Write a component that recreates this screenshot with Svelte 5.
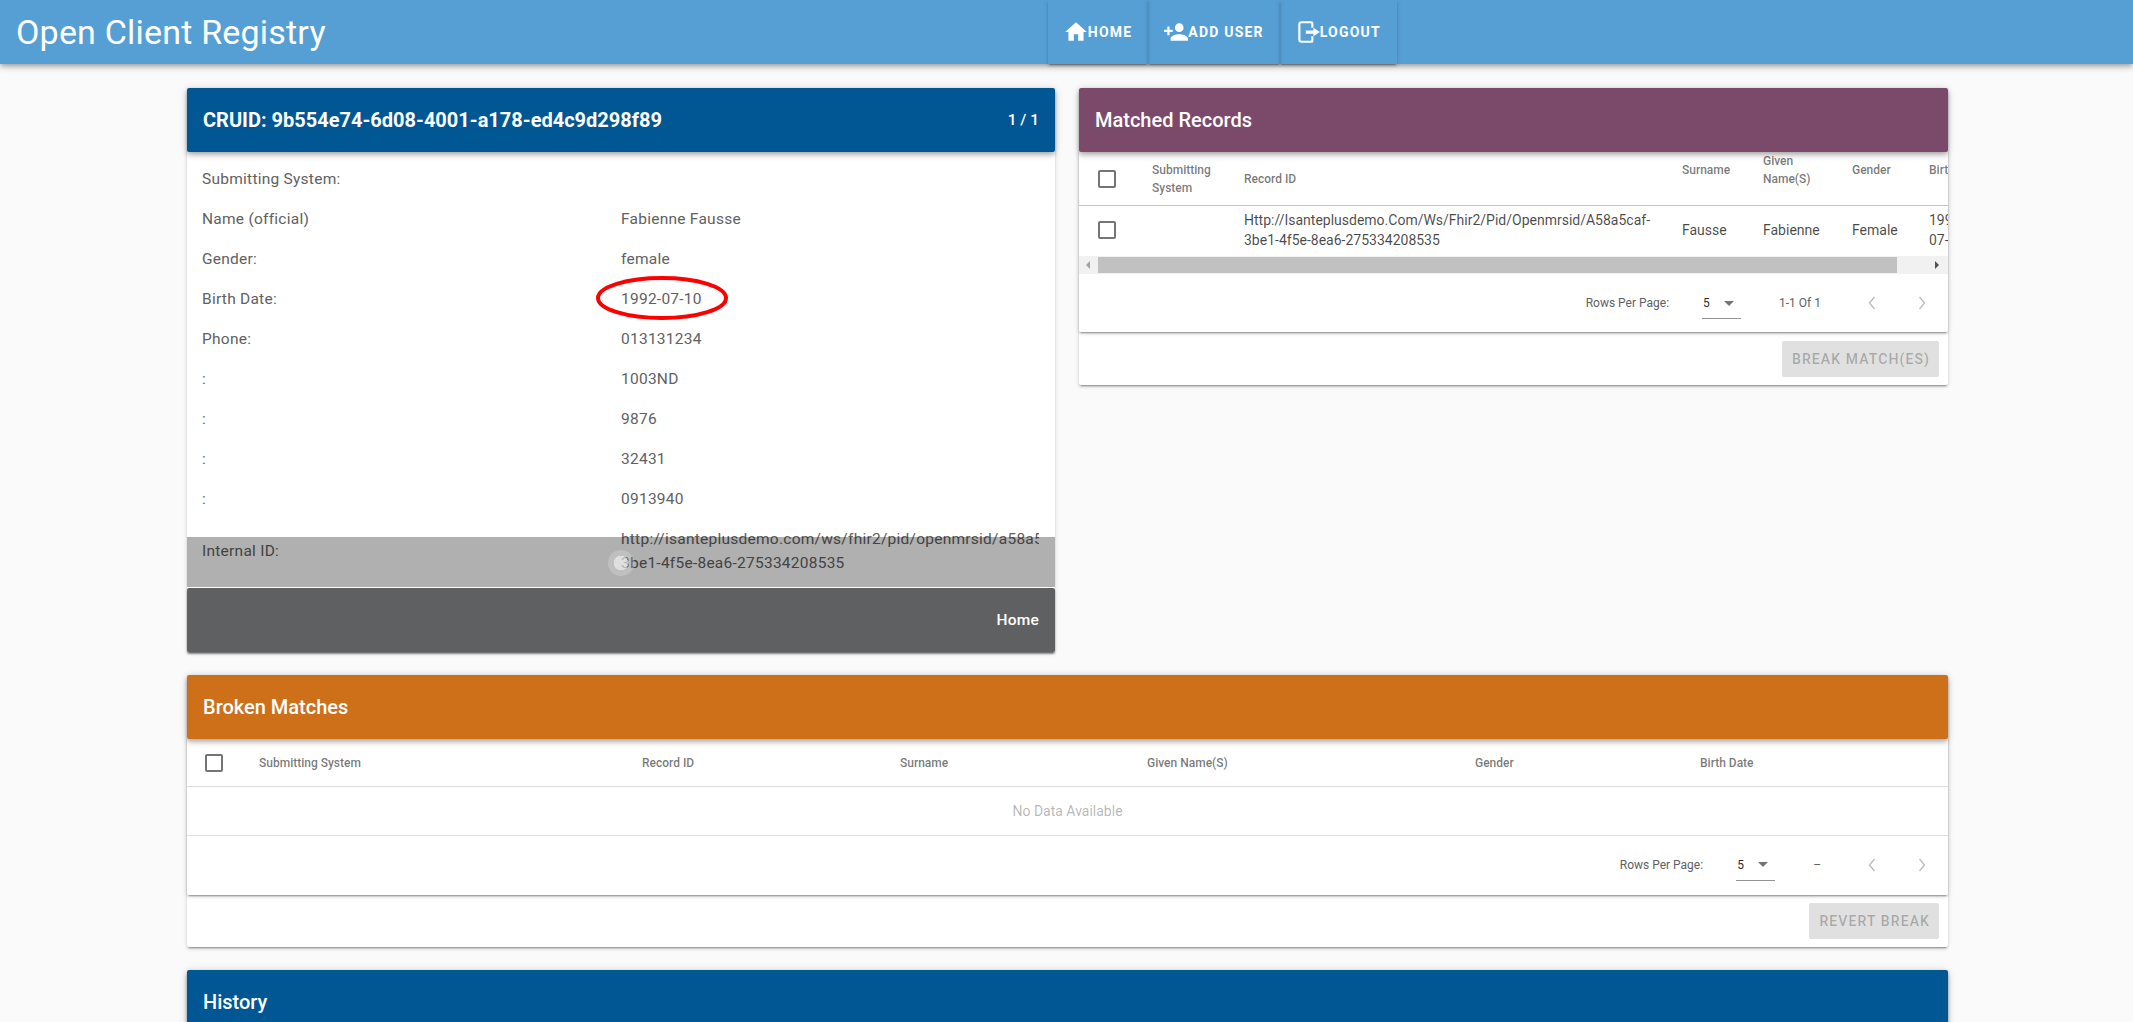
<script>
    const details = [
        ['Submitting System:', ''],
        ['Name (official)', 'Fabienne Fausse'],
        ['Gender:', 'female'],
        ['Birth Date:', '1992-07-10'],
        ['Phone:', '013131234'],
        [':', '1003ND'],
        [':', '9876'],
        [':', '32431'],
        [':', '0913940'],
        ['Internal ID:', 'http://isanteplusdemo.com/ws/fhir2/pid/openmrsid/a58a5caf-3be1-4f5e-8ea6-275334208535']
    ];
    const brokenCols = ['Submitting System', 'Record ID', 'Surname', 'Given Name(S)', 'Gender', 'Birth Date'];
</script>

{#snippet checkbox()}
    <svg class="check" viewBox="0 0 24 24"><path d="M19 3H5c-1.11 0-2 .89-2 2v14a2 2 0 0 0 2 2h14a2 2 0 0 0 2-2V5a2 2 0 0 0-2-2m0 2v14H5V5h14z" /></svg>
{/snippet}

{#snippet pager(range)}
    <div class="pager">
        <span class="rows-label">Rows Per Page:</span>
        <div class="select"><span>5</span><i class="caret"></i></div>
        <span class="range">{range}</span>
        <svg class="chev" viewBox="0 0 24 24"><path d="M14.5 6l-5 6 5 6" /></svg>
        <svg class="chev" viewBox="0 0 24 24"><path d="M9.5 6l5 6-5 6" /></svg>
    </div>
{/snippet}

<header class="topbar">
    <div class="brand">Open Client Registry</div>
    <div class="spacer"></div>
    <nav>
        <a class="nav-btn">
            <svg viewBox="0 0 24 24"><path d="M10,20V14H14V20H19V12H22L12,3L2,12H5V20H10Z" /></svg>HOME
        </a>
        <a class="nav-btn">
            <svg viewBox="0 0 24 24"><path d="M15,14C12.33,14 7,15.33 7,18V20H23V18C23,15.33 17.67,14 15,14M6,10V7H4V10H1V12H4V15H6V12H9V10M15,12A4,4 0 0,0 19,8A4,4 0 0,0 15,4A4,4 0 0,0 11,8A4,4 0 0,0 15,12Z" /></svg>ADD USER
        </a>
        <a class="nav-btn">
            <svg viewBox="0 0 24 24"><path class="door" d="M16 8V4a1 1 0 0 0-1-1H6a2 2 0 0 0-2 2v14a2 2 0 0 0 2 2h9a1 1 0 0 0 1-1v-4" /><path d="M10 10.5h7V8l6 4-6 4v-2.5h-7z" /></svg>LOGOUT
        </a>
    </nav>
    <div class="spacer"></div>
</header>

<main>
    <div class="top-row">
        <section class="card patient">
            <div class="bar blue bold">
                <span>CRUID: 9b554e74-6d08-4001-a178-ed4c9d298f89</span>
                <small>1 / 1</small>
            </div>
            <div class="details">
                {#each details as [label, value]}
                    <div class="label">{label}</div>
                    <div class="value">{value}</div>
                {/each}
            </div>
            <div class="bar grey"><span class="home-link">Home</span></div>

            <!-- overlays: the fading dialog scrim and the hand drawn mark -->
            <div class="scrim"></div>
            <div class="ripple"></div>
            <svg class="mark" viewBox="0 0 136 48"><ellipse cx="68" cy="24" rx="64" ry="20" /></svg>
        </section>

        <section class="card matched">
            <div class="bar purple">Matched Records</div>
            <div class="inner">
                <div class="scroll-clip">
                    <table class="matched-table">
                        <colgroup>
                            <col style="width:57px" /><col style="width:92px" /><col style="width:438px" /><col style="width:81px" /><col style="width:89px" /><col style="width:77px" /><col style="width:86px" />
                        </colgroup>
                        <thead>
                            <tr>
                                <th>{@render checkbox()}</th>
                                <th>Submitting System</th>
                                <th>Record ID</th>
                                <th>Surname<i class="sort"></i></th>
                                <th>Given Name(S)<i class="sort"></i></th>
                                <th>Gender<i class="sort"></i></th>
                                <th>Birth Date<i class="sort"></i></th>
                            </tr>
                        </thead>
                        <tbody>
                            <tr>
                                <td>{@render checkbox()}</td>
                                <td></td>
                                <td>Http://Isanteplusdemo.Com/Ws/Fhir2/Pid/Openmrsid/A58a5caf-3be1-4f5e-8ea6-275334208535</td>
                                <td>Fausse</td>
                                <td>Fabienne</td>
                                <td>Female</td>
                                <td>1992-07-10</td>
                            </tr>
                        </tbody>
                    </table>
                </div>
                <div class="scrollbar">
                    <i class="arrow left"></i>
                    <div class="thumb"></div>
                    <i class="arrow right"></i>
                </div>
                {@render pager('1-1 Of 1')}
            </div>
            <div class="actions"><span class="btn-disabled">BREAK MATCH(ES)</span></div>
        </section>
    </div>

    <section class="card broken">
        <div class="bar orange">Broken Matches</div>
        <div class="inner">
            <table class="broken-table">
                <colgroup>
                    <col style="width:56px" /><col style="width:383px" /><col style="width:258px" /><col style="width:247px" /><col style="width:328px" /><col style="width:225px" /><col />
                </colgroup>
                <thead>
                    <tr>
                        <th>{@render checkbox()}</th>
                        {#each brokenCols as col}<th>{col}</th>{/each}
                    </tr>
                </thead>
                <tbody>
                    <tr><td class="empty" colspan="7">No Data Available</td></tr>
                </tbody>
            </table>
            {@render pager('–')}
        </div>
        <div class="actions"><span class="btn-disabled">REVERT BREAK</span></div>
    </section>

    <section class="card history">
        <div class="bar blue">History</div>
    </section>
</main>

<style>
    :global(body) {
        background: #fafafa;
        font-family: Roboto, "Liberation Sans", sans-serif;
        overflow: hidden;
        height: 1022px;
    }

    .topbar {
        display: flex;
        align-items: stretch;
        height: 64px;
        padding-right: 14px;
        background: #569fd4;
        color: #fff;
        box-shadow: 0 2px 4px -1px rgba(0,0,0,.2), 0 4px 5px 0 rgba(0,0,0,.14), 0 1px 10px 0 rgba(0,0,0,.12);
        position: relative;
    }
    .brand {
        font-size: 34px;
        letter-spacing: .2px;
        line-height: 64px;
        padding-left: 16px;
        white-space: nowrap;
    }
    .spacer { flex: 1; }
    nav { display: flex; }
    .nav-btn {
        display: flex;
        align-items: center;
        padding: 0 16px;
        font-size: 14px;
        font-weight: 700;
        letter-spacing: 1.2px;
        box-shadow: 0 3px 1px -2px rgba(0,0,0,.2), 0 2px 2px 0 rgba(0,0,0,.14), 0 1px 5px 0 rgba(0,0,0,.12);
    }
    .nav-btn svg { width: 26px; height: 26px; margin: 0 -1px; fill: #fff; }
    .nav-btn .door { fill: none; stroke: #fff; stroke-width: 2; }

    main {
        width: 1761px;
        margin-left: 187px;
        padding-top: 24px;
    }
    .top-row {
        display: grid;
        grid-template-columns: 868px 869px;
        column-gap: 24px;
        align-items: start;
    }
    .card {
        background: #fff;
        border-radius: 2px;
        box-shadow: 0 3px 1px -2px rgba(0,0,0,.2), 0 2px 2px 0 rgba(0,0,0,.14), 0 1px 5px 0 rgba(0,0,0,.12);
        position: relative;
    }
    .bar {
        display: flex;
        align-items: center;
        justify-content: space-between;
        height: 64px;
        padding: 0 16px;
        color: #fff;
        font-size: 20px;
        font-weight: 500;
        border-radius: 2px;
        box-shadow: 0 2px 4px -1px rgba(0,0,0,.2), 0 4px 5px 0 rgba(0,0,0,.14), 0 1px 10px 0 rgba(0,0,0,.12);
        position: relative;
    }
    .bold { font-weight: 700; }
    .bar small { font-size: 15.5px; font-weight: 500; }
    .blue { background: #015694; }
    .purple { background: #7b4a6b; }
    .orange { background: #ce6f1a; }
    .grey { background: #5f6062; justify-content: flex-end; box-shadow: 0 2px 2px rgba(0,0,0,.3); }
    .home-link { font-size: 15.5px; font-weight: 500; letter-spacing: .25px; }

    .details {
        display: grid;
        grid-template-columns: 419px 418px;
        align-items: center;
        padding: 7px 16px 5px 15px;
        font-size: 15.5px;
        letter-spacing: .25px;
        line-height: 24px;
        color: #616161;
    }
    .label, .value { padding: 8px 0; min-height: 24px; overflow: hidden; }

    .scrim {
        position: absolute;
        left: 0;
        right: 0;
        bottom: 65px;
        height: 50px;
        background: rgba(0,0,0,.31);
    }
    .ripple {
        position: absolute;
        left: 421px;
        top: 462px;
        width: 26px;
        height: 26px;
        border-radius: 50%;
        background: radial-gradient(circle, rgba(255,255,255,.6) 0 7px, rgba(255,255,255,.2) 7.5px);
    }
    .mark {
        position: absolute;
        left: 407px;
        top: 186px;
        width: 136px;
        height: 48px;
    }
    .mark ellipse { fill: none; stroke: #f00; stroke-width: 4; }

    .inner {
        background: #fff;
        border-radius: 2px;
        box-shadow: 0 3px 1px -2px rgba(0,0,0,.2), 0 2px 2px 0 rgba(0,0,0,.14), 0 1px 5px 0 rgba(0,0,0,.12);
    }
    .scroll-clip { overflow: hidden; }
    table {
        border-collapse: collapse;
        table-layout: fixed;
    }
    .matched-table { width: 920px; }
    .broken-table { width: 100%; }
    th {
        padding: 0 16px;
        font-size: 12px;
        font-weight: 500;
        line-height: 18px;
        text-align: left;
        color: rgba(0,0,0,.54);
        border-bottom: 1px solid rgba(0,0,0,.12);
    }
    td {
        padding: 4px 16px 6px;
        font-size: 14px;
        line-height: 20px;
        color: rgba(0,0,0,.72);
    }
    .matched-table th:first-child, .matched-table td:first-child { padding-left: 16px; padding-right: 0; }
    .broken-table th:first-child { padding: 0 0 0 15px; }
    .broken-table th { height: 47px; }
    .sort { display: block; height: 17px; }
    .check { display: block; width: 24px; height: 24px; fill: rgba(0,0,0,.54); }
    .empty {
        height: 48px;
        padding: 0;
        text-align: center;
        color: rgba(0,0,0,.3);
        font-size: 14px;
        border-bottom: 1px solid rgba(0,0,0,.12);
    }

    .scrollbar {
        display: flex;
        align-items: center;
        height: 18px;
        background: #f1f1f1;
    }
    .thumb { width: 799px; height: 16px; margin-left: 8px; background: #c1c1c1; }
    .arrow { width: 0; height: 0; border-style: solid; }
    .arrow.left { margin-left: 7px; border-width: 4px 4px 4px 0; border-color: transparent #a3a3a3 transparent transparent; }
    .arrow.right { margin-left: 38px; border-width: 4px 0 4px 4px; border-color: transparent transparent transparent #505050; }

    .pager {
        display: flex;
        align-items: center;
        justify-content: flex-end;
        box-sizing: border-box;
        height: 58px;
        padding: 0 14px 0 0;
        font-size: 12px;
        color: rgba(0,0,0,.54);
    }
    .broken .pager { height: 59px; padding-bottom: 2px; }
    .rows-label { color: #616161; margin-right: 33px; }
    .select {
        display: flex;
        align-items: center;
        justify-content: space-between;
        box-sizing: border-box;
        width: 39px;
        height: 31px;
        padding: 0 7px 0 1px;
        margin-top: 1px;
        border-bottom: 1px solid rgba(0,0,0,.42);
        color: rgba(0,0,0,.87);
    }
    .caret {
        border-style: solid;
        border-width: 5px 5px 0;
        border-color: rgba(0,0,0,.54) transparent transparent;
    }
    .range { color: #616161; margin-left: 38px; margin-right: 13px; }
    .chev {
        width: 24px;
        height: 24px;
        margin-left: 26px;
        fill: none;
        stroke: rgba(0,0,0,.26);
        stroke-width: 1.4;
    }
    .actions {
        display: flex;
        justify-content: flex-end;
        padding: 8px 9px;
    }
    .matched .actions { padding-top: 9px; }
    .btn-disabled {
        display: block;
        height: 36px;
        line-height: 36px;
        padding: 0 9px 0 10px;
        border-radius: 2px;
        background: #e0e0e0;
        color: rgba(0,0,0,.26);
        font-size: 14px;
        font-weight: 500;
        letter-spacing: 1.1px;
    }

    .broken { margin-top: 23px; }
    .history { margin-top: 23px; }
</style>
